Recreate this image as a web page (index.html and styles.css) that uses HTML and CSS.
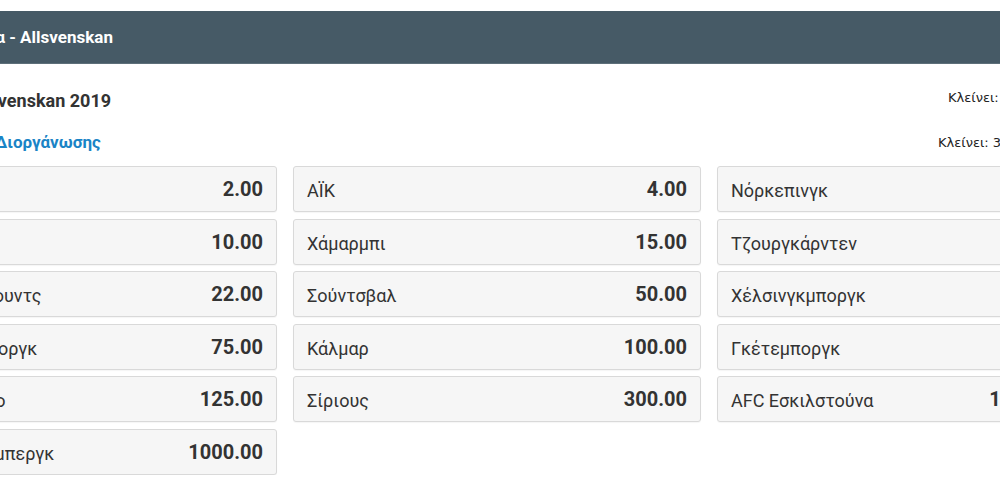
FILE: index.html
```html
<!DOCTYPE html>
<html lang="el">
<head>
<meta charset="utf-8">
<title>Allsvenskan</title>
<link rel="stylesheet" href="styles.css">
</head>
<body>
<div class="page">
  <div class="topbar"><span class="topbar-title">Σουηδία - Allsvenskan</span></div>
  <div class="event-row event-row--title">
    <h1 class="event-title">Allsvenskan 2019</h1>
    <span class="closes closes--up">Κλείνει: 31/03/2019 15:00</span>
  </div>
  <div class="event-row event-row--market">
    <a class="market-link">Νικητής Διοργάνωσης</a>
    <span class="closes">Κλείνει: 30/11/2019 19:00</span>
  </div>
  <div class="odds-grid">
    <div class="sel"><span class="sel-name">Μάλμε</span><span class="sel-odds">2.00</span></div>
    <div class="sel"><span class="sel-name">ΑΪΚ</span><span class="sel-odds">4.00</span></div>
    <div class="sel"><span class="sel-name">Νόρκεπινγκ</span><span class="sel-odds">8.00</span></div>
    <div class="sel"><span class="sel-name">Χάκεν</span><span class="sel-odds">10.00</span></div>
    <div class="sel"><span class="sel-name">Χάμαρμπι</span><span class="sel-odds">15.00</span></div>
    <div class="sel"><span class="sel-name">Τζουργκάρντεν</span><span class="sel-odds">20.00</span></div>
    <div class="sel"><span class="sel-name">Έστερσουντς</span><span class="sel-odds">22.00</span></div>
    <div class="sel"><span class="sel-name">Σούντσβαλ</span><span class="sel-odds">50.00</span></div>
    <div class="sel"><span class="sel-name">Χέλσινγκμποργκ</span><span class="sel-odds">60.00</span></div>
    <div class="sel"><span class="sel-name">Έλφσμποργκ</span><span class="sel-odds">75.00</span></div>
    <div class="sel"><span class="sel-name">Κάλμαρ</span><span class="sel-odds">100.00</span></div>
    <div class="sel"><span class="sel-name">Γκέτεμποργκ</span><span class="sel-odds">100.00</span></div>
    <div class="sel"><span class="sel-name">Έρεμπρο</span><span class="sel-odds">125.00</span></div>
    <div class="sel"><span class="sel-name">Σίριους</span><span class="sel-odds">300.00</span></div>
    <div class="sel"><span class="sel-name">AFC Εσκιλστούνα</span><span class="sel-odds">1000.00</span></div>
    <div class="sel"><span class="sel-name">Φάλκενμπεργκ</span><span class="sel-odds">1000.00</span></div>
  </div>
</div>
</body>
</html>
```
FILE: styles.css
```css
html, body {
  margin: 0;
  padding: 0;
  background: #ffffff;
  overflow: hidden;
}
body {
  font-family: Roboto, "Noto Sans", sans-serif;
  color: #333333;
}
.page {
  margin-left: -81px;
  width: 1220px;
  padding-top: 11px;
}
.topbar {
  height: 52px;
  border-bottom: 1px solid #5d6f79;
  background: #465a66;
  display: flex;
  align-items: center;
  padding-left: 23px;
}
.topbar-title {
  color: #ffffff;
  font-weight: 700;
  font-size: 17px;
}
.event-row {
  display: grid;
  align-items: center;
  height: 26px;
}
.event-row--title {
  margin-top: 23px;
  grid-template-columns: 1029px auto;
}
.event-row--market {
  margin-top: 16px;
  grid-template-columns: 1019px auto;
}
.event-title {
  margin: 0;
  padding-left: 48px;
  font-size: 18px;
  font-weight: 700;
  color: #333333;
  white-space: nowrap;
}
.market-link {
  padding-left: 7px;
  font-size: 17px;
  font-weight: 700;
  color: #1a84c6;
  white-space: nowrap;
}
.closes {
  font-family: "DejaVu Sans", Verdana, sans-serif;
  font-size: 13px;
  color: #222222;
  white-space: nowrap;
}
.closes--up {
  margin-bottom: 6px;
}
.odds-grid {
  margin-top: 11px;
  display: grid;
  grid-template-columns: 358px 408px 361px;
  grid-auto-rows: 46px;
  column-gap: 16px;
  row-gap: 6.5px;
}
.sel {
  box-sizing: border-box;
  display: flex;
  align-items: center;
  justify-content: space-between;
  padding: 0 13px;
  background: #f6f6f6;
  border: 1px solid #d9d9d9;
  border-radius: 3px;
  box-shadow: 0 1px 1px rgba(0,0,0,0.04);
}
.sel-name {
  font-size: 18px;
  color: #333333;
  padding-top: 3px;
  white-space: nowrap;
}
.sel-odds {
  font-size: 20px;
  font-weight: 700;
  color: #333333;
}
```
